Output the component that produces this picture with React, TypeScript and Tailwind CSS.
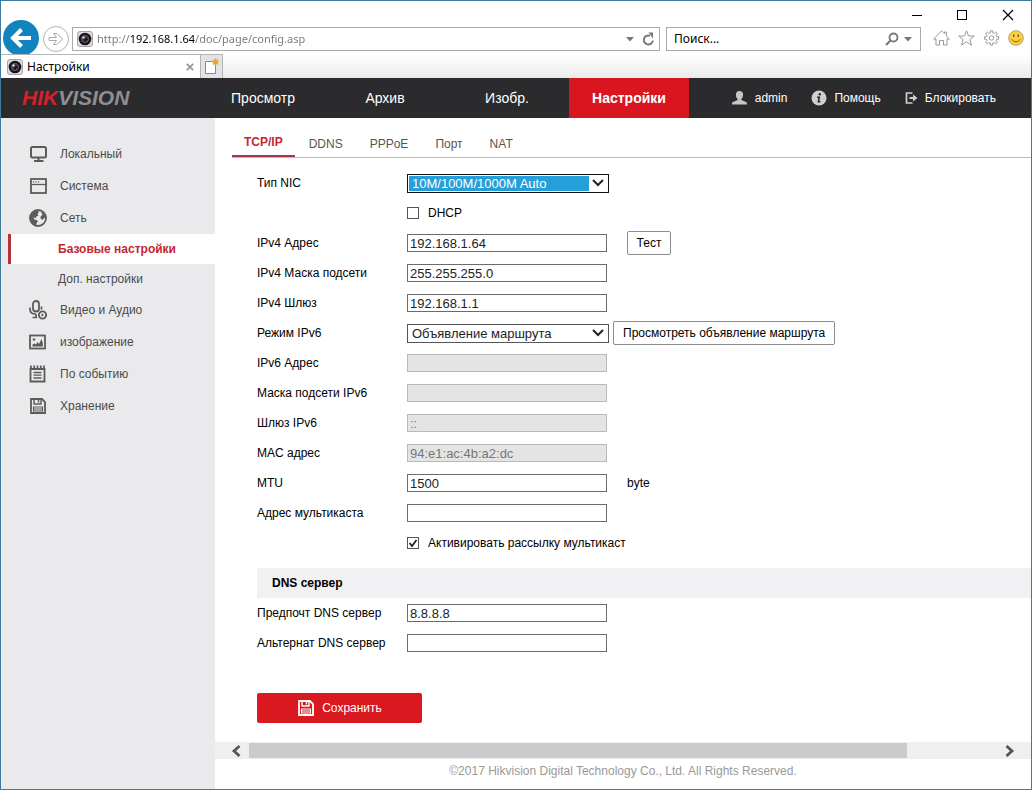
import React, { useState } from "react";

const topNav = ["Просмотр", "Архив", "Изобр.", "Настройки"];
const tabs = ["TCP/IP", "DDNS", "PPPoE", "Порт", "NAT"];

type FieldProps = {
    id: string;
    label: string;
    value?: string;
    disabled?: boolean;
    children?: React.ReactNode;
};

function Row({ id, label, children }: { id: string; label: string; children: React.ReactNode }) {
    return (
        <div className="flex h-[30px] items-center">
            <label htmlFor={id} className="w-[150px] shrink-0 whitespace-nowrap">
                {label}
            </label>
            {children}
        </div>
    );
}

function Field({ id, label, value = "", disabled, children }: FieldProps) {
    const [text, setText] = useState(value);

    return (
        <Row id={id} label={label}>
            <input
                id={id}
                type="text"
                className="mr-5 h-[18px] w-[200px] border border-[#6b6b6b] bg-white px-[2px] text-[13px] leading-4 text-[#222] disabled:border-[#b9b9b9] disabled:bg-[#e4e4e4] disabled:text-[#777]"
                value={text}
                disabled={disabled}
                onChange={(e) => setText(e.target.value)}
            />
            {children}
        </Row>
    );
}

function SelectArrow() {
    return (
        <svg width="18" height="14" viewBox="0 0 18 14" className="pointer-events-none shrink-0">
            <path d="M4 4l5 5 5-5" fill="none" stroke="#222" strokeWidth="2" />
        </svg>
    );
}

function Check({ label, checked: initial = false }: { label: string; checked?: boolean }) {
    const [checked, setChecked] = useState(initial);

    return (
        <div className="flex h-[30px] items-center pl-[150px]">
            <label className="flex items-center gap-[9px] whitespace-nowrap">
                <span className="grid size-3">
                    <input
                        type="checkbox"
                        className="col-start-1 row-start-1 size-3 appearance-none border border-[#555] bg-white"
                        checked={checked}
                        onChange={(e) => setChecked(e.target.checked)}
                    />
                    {checked && (
                        <svg viewBox="0 0 12 12" className="pointer-events-none col-start-1 row-start-1 size-3">
                            <path d="M2.5 6l2.5 3 4.5-6" fill="none" stroke="#222" strokeWidth="1.8" />
                        </svg>
                    )}
                </span>
                {label}
            </label>
        </div>
    );
}

function CameraIcon() {
    return (
        <svg width="16" height="16" viewBox="0 0 16 16" className="shrink-0">
            <rect x="0.5" y="0.5" width="15" height="15" rx="2.5" fill="#dcdcdc" stroke="#a5a5a5" />
            <circle cx="8" cy="8" r="6.3" fill="#16141c" />
            <circle cx="8" cy="8" r="3.6" fill="#3b3042" stroke="#6d6577" strokeWidth="0.8" />
            <circle cx="9" cy="9" r="1.6" fill="#0b0a10" />
            <circle cx="6.5" cy="6.5" r="1.2" fill="#d3dbe6" />
            <circle cx="9.8" cy="10" r="0.8" fill="#c14a44" />
        </svg>
    );
}

function FloppyIcon() {
    return (
        <svg width="18" height="18" viewBox="0 0 18 18" className="shrink-0" fill="none" stroke="currentColor">
            <path d="M2 2h11l3 3v11H2z" strokeWidth="1.8" />
            <path d="M5 2v5h7V2" strokeWidth="1.4" />
            <path d="M9.5 3v2.5" strokeWidth="1.4" />
            <path d="M4.500 10h9v4h-9zM4.500 12h9" strokeWidth="1.1" />
        </svg>
    );
}

const sideIcons = {
    monitor: (
        <svg width="18" height="18" viewBox="0 0 18 18" fill="none" stroke="currentColor">
            <rect x="2" y="2" width="15" height="10.5" rx="1.5" strokeWidth="2" />
            <path d="M9.5 12.500v3M5 16h9.500" strokeWidth="2" />
        </svg>
    ),
    system: (
        <svg width="18" height="18" viewBox="0 0 18 18" fill="none" stroke="currentColor">
            <rect x="2" y="2" width="15" height="14" strokeWidth="1.8" />
            <path d="M2 7.5h15" strokeWidth="1.3" />
            <path d="M4 4.800h1.200M6.500 4.800h1.200M9 4.800h1.200" strokeWidth="1.3" />
        </svg>
    ),
    globe: (
        <svg width="18" height="18" viewBox="0 0 18 18">
            <circle cx="9" cy="9" r="8" fill="none" stroke="currentColor" strokeWidth="1.8" />
            <path
                d="M8.5 1.500L10 3 8.500 5l1 1.500-2 1L6.800 9 4.500 8.500l.8 2L8 11l.8 1.500-1.300 2L7 17 2.500 14 1 9l2-5 3-2zM12 2.500l3 2 1.500 4-1.500.5-1.500 2-2-1.500.3-2.500 1.700-1z"
                fill="currentColor"
            />
        </svg>
    ),
    av: (
        <svg width="18" height="20" viewBox="0 0 18 20" fill="none" stroke="currentColor">
            <rect x="4" y="1" width="6" height="10.5" rx="3" strokeWidth="1.8" />
            <path d="M1 7.500v2c0 3 2.500 4.500 6 4.500M12.500 6.500v3M7 14v4M3.500 17.500H8" strokeWidth="1.7" />
            <circle cx="13.5" cy="15" r="3.6" strokeWidth="1.9" />
            <path d="M12.500 13.300v3.400l2.600-1.700z" fill="currentColor" stroke="none" />
        </svg>
    ),
    image: (
        <svg width="18" height="18" viewBox="1 0 18 18">
            <rect x="2" y="2.5" width="15" height="13" fill="none" stroke="currentColor" strokeWidth="1.8" />
            <path d="M4.500 13.500V11.500l2-1 1.500 1 1.500-2.500 1.500 2L13.500 6l1.300 4v3.500z" fill="currentColor" />
            <circle cx="6" cy="6.500" r="1.2" fill="currentColor" />
        </svg>
    ),
    event: (
        <svg width="18" height="18" viewBox="1 0 18 18" fill="none" stroke="currentColor">
            <path d="M2.500 3v13.500h14V3M2 4h15" strokeWidth="1.8" />
            <path d="M3 .5v3M6.200.5v3M9.500.5v3M12.800.5v3M16 .5v3" strokeWidth="1.7" />
            <path d="M5.500 7.500h8M5.500 10.200h8M5.500 13h8" strokeWidth="1.3" />
        </svg>
    ),
    storage: <FloppyIcon />,
};

type SideItem = { label: string; icon?: keyof typeof sideIcons; active?: boolean };

const sideItems: SideItem[] = [
    { label: "Локальный", icon: "monitor" },
    { label: "Система", icon: "system" },
    { label: "Сеть", icon: "globe" },
    { label: "Базовые настройки", active: true },
    { label: "Доп. настройки" },
    { label: "Видео и Аудио", icon: "av" },
    { label: "изображение", icon: "image" },
    { label: "По событию", icon: "event" },
    { label: "Хранение", icon: "storage" },
];

function BrowserChrome() {
    const [url, setUrl] = useState("http://192.168.1.64/doc/page/config.asp");

    return (
        <header className="bg-white font-['Noto_Sans',sans-serif] text-xs text-black">
            <div className="flex h-[26px] items-center justify-end gap-[29px] pr-[15px] pt-[2px]">
                <button aria-label="Свернуть">
                    <svg width="16" height="16" viewBox="0 0 16 16">
                        <path d="M2 8.5h10" stroke="#000" />
                    </svg>
                </button>
                <button aria-label="Развернуть">
                    <svg width="16" height="16" viewBox="0 0 16 16">
                        <rect x="2.5" y="3.5" width="9" height="9" fill="none" stroke="#000" />
                    </svg>
                </button>
                <button aria-label="Закрыть">
                    <svg width="16" height="16" viewBox="0 0 16 16">
                        <path d="M3 3l10 10M13 3L3 13" stroke="#000" strokeWidth="1.2" />
                    </svg>
                </button>
            </div>
            <div className="flex h-[27px] items-end pl-px pr-[7px]">
                <button aria-label="Назад" className="shrink-0">
                    <svg width="38" height="34" viewBox="0 0 38 34" className="block">
                        <circle cx="19" cy="18" r="18" fill="#1184c0" />
                        <path d="M29 18H12M19.500 9.500L11 18l8.500 8.500" fill="none" stroke="#fff" strokeWidth="4" />
                    </svg>
                </button>
                <button aria-label="Вперёд" className="shrink-0">
                    <svg width="32" height="30" viewBox="0 0 32 30" className="block">
                        <circle cx="16" cy="15" r="12.5" fill="#fff" stroke="#b0b0b0" />
                        <path
                            d="M9 13.500h7.500l-3-4h3.500l5.500 5.500-5.500 5.500h-3.500l3-4H9z"
                            fill="#fff"
                            stroke="#a8a8a8"
                        />
                    </svg>
                </button>
                <div className="mb-[3px] flex h-6 min-w-0 flex-1 items-center border border-[#a9a9a9] px-1">
                    <CameraIcon />
                    <input
                        type="text"
                        aria-label="Адрес"
                        className="ml-1 min-w-0 flex-1 bg-[linear-gradient(90deg,#777_33px,#000_33px,#000_97px,#777_97px)] bg-clip-text text-[11px] text-transparent outline-none"
                        value={url}
                        onChange={(e) => setUrl(e.target.value)}
                    />
                    <svg width="8" height="5" viewBox="0 0 8 5" className="mr-2">
                        <path d="M0 0h8L4 4.500z" fill="#777" />
                    </svg>
                    <button aria-label="Обновить">
                        <svg width="13" height="14" viewBox="0 0 13 14" className="block">
                            <path d="M10.800 8.500A4.500 4.500 0 1 1 8 3.800" fill="none" stroke="#777" strokeWidth="1.9" />
                            <path d="M6.500.5H11v6z" fill="#777" />
                        </svg>
                    </button>
                </div>
                <div className="mb-[3px] ml-[6px] flex h-6 w-[255px] items-center border border-[#a9a9a9] pl-[7px] pr-2">
                    <input
                        type="text"
                        aria-label="Поиск"
                        placeholder="Поиск..."
                        className="min-w-0 flex-1 placeholder:text-black outline-none"
                    />
                    <button aria-label="Найти" className="mr-[5px]">
                        <svg width="14" height="14" viewBox="0 0 14 14" className="block">
                            <circle cx="8.5" cy="5.5" r="4" fill="none" stroke="#777" strokeWidth="1.8" />
                            <path d="M5.500 8.500l-4.500 4.500" stroke="#777" strokeWidth="2.2" />
                        </svg>
                    </button>
                    <svg width="8" height="5" viewBox="0 0 8 5">
                        <path d="M0 0h8L4 4.500z" fill="#777" />
                    </svg>
                </div>
                <div className="mb-2 ml-3 flex gap-2">
                    <button aria-label="Домой">
                        <svg width="17" height="16" viewBox="0 0 17 16" className="block" fill="#fff" stroke="#999">
                            <path d="M8.500.8l3 3V2h2v3.800L16.300 9l-1 1-1.300-1.200V15h-3.500v-4.500h-4V15H3V8.800L1.700 10l-1-1z" />
                        </svg>
                    </button>
                    <button aria-label="Избранное">
                        <svg width="17" height="16" viewBox="0 0 17 16" className="block" fill="#fff" stroke="#999">
                            <path d="M8.500.8l2 5.200h5.800l-4.500 3.600 1.700 5.600-5-3.400-5 3.400 1.700-5.600L.7 6h5.800z" />
                        </svg>
                    </button>
                    <button aria-label="Сервис">
                        <svg width="17" height="16" viewBox="0 0 17 16" className="block" fill="#fff" stroke="#999">
                            <path d="M7.300.8h2.400v2l1.500.6 1.500-1.400 1.700 1.700L13 5.200l.6 1.500h2v2.500h-2l-.6 1.500 1.400 1.500-1.700 1.700-1.500-1.400-1.500.6v2H7.300v-2l-1.500-.6-1.500 1.400-1.700-1.700L4 10.700l-.6-1.500h-2V6.700h2L4 5.200 2.600 3.700 4.300 2l1.500 1.400 1.500-.6z" />
                            <circle cx="8.5" cy="8" r="2.2" />
                        </svg>
                    </button>
                    <button aria-label="Отзыв">
                        <svg width="16" height="16" viewBox="0 0 16 16" className="block">
                            <circle cx="8" cy="8" r="7.3" fill="#fbd03f" stroke="#b9a064" />
                            <path d="M5.700 4.500v2.500M10.300 4.500v2.500" stroke="#7a5a10" strokeWidth="1.4" />
                            <path d="M3.800 9.200c1.500 3.400 6.900 3.400 8.400 0" fill="none" stroke="#7a5a10" />
                        </svg>
                    </button>
                </div>
            </div>
            <div className="flex h-6 bg-linear-to-b from-white to-[#ebebeb]">
                <div className="flex w-[199px] items-center gap-1 border-t border-[#b5b5b5] bg-white pl-[6px] pr-[6px]">
                    <CameraIcon />
                    <span className="flex-1">Настройки</span>
                    <button aria-label="Закрыть вкладку">
                        <svg width="8" height="8" viewBox="0 0 8 8" className="block">
                            <path d="M.8.8l6.400 6.400M7.200.8L.8 7.200" stroke="#999" strokeWidth="1.8" />
                        </svg>
                    </button>
                </div>
                <button
                    aria-label="Новая вкладка"
                    className="flex w-[23px] items-center justify-center border border-b-0 border-[#b5b5b5] bg-[#e3e3e6]"
                >
                    <svg width="16" height="18" viewBox="0 0 16 18">
                        <path d="M1.500 3.500h10v12h-10z" fill="#fff" stroke="#8a8a8a" />
                        <circle cx="11.5" cy="4" r="3" fill="#f7dfab" />
                        <path d="M11.500 .5v7M8 4h7M9 1.500l5 5M14 1.500l-5 5" stroke="#e8a12b" strokeWidth="1.1" />
                    </svg>
                </button>
            </div>
        </header>
    );
}

function TopBar() {
    return (
        <div className="flex h-10 items-center bg-[#2b2b2d] text-white">
            <div className="w-[202px] shrink-0 pl-[21px] text-[21px] leading-6 font-bold italic">
                <span className="text-[#d6202a]">HIK</span>
                <span className="text-[#8f8f92]">VISION</span>
            </div>
            <nav className="flex h-full gap-[2px] text-sm">
                {topNav.map((item) => (
                    <a
                        key={item}
                        href="#"
                        className={
                            item === "Настройки"
                                ? "flex w-[120px] items-center justify-center bg-[#d9161f] font-bold"
                                : "flex w-[120px] items-center justify-center"
                        }
                    >
                        {item}
                    </a>
                ))}
            </nav>
            <div className="ml-auto flex items-center gap-6 pr-[35px] text-xs">
                <a href="#" className="flex items-center gap-2">
                    <svg width="15" height="16" viewBox="0 0 15 16" fill="#c6c6c6">
                        <path d="M7.500 1c2.300 0 3.700 1.600 3.600 4-.1 1.900-.8 3.200-1.700 4v1l4.600 2c.7.400 1 1 1 2.500H0c0-1.500.3-2.100 1-2.500l4.600-2V9C4.700 8.200 4 6.900 3.900 5 3.800 2.600 5.200 1 7.500 1z" />
                    </svg>
                    admin
                </a>
                <a href="#" className="flex items-center gap-[7px]">
                    <svg width="16" height="16" viewBox="0 0 16 16">
                        <circle cx="8" cy="8" r="7.5" fill="#d0d0d0" />
                        <circle cx="8.8" cy="4.3" r="1.2" fill="#2b2b2d" />
                        <path d="M6 7.200h2.300l-.9 4.500h2" fill="none" stroke="#2b2b2d" strokeWidth="1.6" />
                    </svg>
                    Помощь
                </a>
                <a href="#" className="flex items-center gap-[7px]">
                    <svg width="13" height="14" viewBox="0 0 13 14" fill="none" stroke="#d0d0d0">
                        <path d="M7.500 2H1.500v10h6" strokeWidth="1.7" />
                        <path d="M4.500 7H9" strokeWidth="2" />
                        <path d="M8 3.500L12.500 7 8 10.500z" fill="#d0d0d0" stroke="none" />
                    </svg>
                    Блокировать
                </a>
            </div>
        </div>
    );
}

function Sidebar() {
    return (
        <aside className="w-[214px] shrink-0 bg-[#eaeaec] pl-[7px] pt-5 text-xs text-[#4a4a4a]">
            {sideItems.map((item) =>
                item.icon ? (
                    <a key={item.label} href="#" className="flex h-8 items-center pl-[21px]">
                        <span className="w-[31px] text-[#5b5b5b]">{sideIcons[item.icon]}</span>
                        {item.label}
                    </a>
                ) : (
                    <a
                        key={item.label}
                        href="#"
                        className={
                            item.active
                                ? "flex h-[30px] items-center border-l-[3px] border-[#b8323c] bg-white pl-[47px] font-bold text-[#c4272f]"
                                : "flex h-[30px] items-center pl-[50px]"
                        }
                    >
                        {item.label}
                    </a>
                )
            )}
        </aside>
    );
}

function NetworkForm() {
    return (
        <form className="pb-[19px] pl-[42px] pt-[10px] text-xs text-black" onSubmit={(e) => e.preventDefault()}>
            <Row id="nic" label="Тип NIC">
                <div className="flex h-[19px] w-[202px] items-center border border-[#111] bg-white p-px">
                    <select
                        id="nic"
                        className="h-full min-w-0 flex-1 appearance-none bg-[#259fda] pl-[3px] text-[13px] leading-[15px] text-white outline-none"
                    >
                        <option>10M/100M/1000M Auto</option>
                    </select>
                    <SelectArrow />
                </div>
            </Row>
            <Check label="DHCP" />
            <Field id="ipv4" label="IPv4 Адрес" value="192.168.1.64">
                <button type="button" className="h-6 w-11 rounded-[2px] border border-[#8c8c8c] bg-white">
                    Тест
                </button>
            </Field>
            <Field id="mask" label="IPv4 Маска подсети" value="255.255.255.0" />
            <Field id="gateway" label="IPv4 Шлюз" value="192.168.1.1" />
            <Row id="ipv6mode" label="Режим IPv6">
                <div className="flex h-[19px] w-[202px] shrink-0 items-center border border-[#555] bg-white p-px">
                    <select
                        id="ipv6mode"
                        className="h-full min-w-0 flex-1 appearance-none pl-[3px] text-[13px] leading-[15px] text-[#222] outline-none"
                    >
                        <option>Объявление маршрута</option>
                    </select>
                    <SelectArrow />
                </div>
                <button
                    type="button"
                    className="ml-1 h-6 whitespace-nowrap rounded-[2px] border border-[#8c8c8c] bg-white px-[9px]"
                >
                    Просмотреть объявление маршрута
                </button>
            </Row>
            <Field id="ipv6" label="IPv6 Адрес" disabled />
            <Field id="ipv6mask" label="Маска подсети IPv6" disabled />
            <Field id="ipv6gateway" label="Шлюз IPv6" value="::" disabled />
            <Field id="mac" label="MAC адрес" value="94:e1:ac:4b:a2:dc" disabled />
            <Field id="mtu" label="MTU" value="1500">
                byte
            </Field>
            <Field id="multicast" label="Адрес мультикаста" />
            <Check label="Активировать рассылку мультикаст" checked />

            <h2 className="mt-[10px] flex h-[30px] items-center bg-[#f1f0f2] pl-[15px] font-bold">DNS сервер</h2>
            <Field id="dns1" label="Предпочт DNS сервер" value="8.8.8.8" />
            <Field id="dns2" label="Альтернат DNS сервер" />

            <button
                type="submit"
                className="mt-[35px] flex h-[30px] w-[165px] items-center justify-center gap-[7px] rounded-[2px] bg-[#d9181f] text-white"
            >
                <FloppyIcon />
                Сохранить
            </button>
        </form>
    );
}

export default function App() {
    return (
        <div className="flex min-h-screen flex-col border border-[#3c7d9f] bg-white font-['Liberation_Sans',Arial,sans-serif]">
            <BrowserChrome />
            <TopBar />
            <div className="flex flex-1">
                <Sidebar />
                <main className="min-w-0 flex-1">
                    <div className="ml-[17px] flex h-10 gap-px border-b border-[#bdbdbd] text-xs text-[#555]">
                        {tabs.map((tab) => (
                            <a
                                key={tab}
                                href="#"
                                className={
                                    tab === "TCP/IP"
                                        ? "flex items-center border-b-2 border-[#a5384a] px-3 pt-[10px] font-bold text-[#c4272f]"
                                        : "flex items-center px-[13px] pt-3"
                                }
                            >
                                {tab}
                            </a>
                        ))}
                    </div>
                    <NetworkForm />
                    <div className="flex h-[17px] items-center bg-[#efefef]">
                        <button aria-label="Прокрутить влево" className="flex w-[34px] justify-end pr-2">
                            <svg width="10" height="12" viewBox="0 0 10 12">
                                <path d="M8.500 1L3 6l5.500 5" fill="none" stroke="#555" strokeWidth="2.8" />
                            </svg>
                        </button>
                        <div className="flex-1">
                            <div className="h-[15px] w-[88%] bg-[#cbcbcd]" />
                        </div>
                        <button aria-label="Прокрутить вправо" className="flex w-[34px] pl-2">
                            <svg width="10" height="12" viewBox="0 0 10 12">
                                <path d="M1.500 1L7 6l-5.500 5" fill="none" stroke="#555" strokeWidth="2.8" />
                            </svg>
                        </button>
                    </div>
                    <footer className="flex h-6 items-center justify-center text-xs text-[#999]">
                        ©2017 Hikvision Digital Technology Co., Ltd. All Rights Reserved.
                    </footer>
                </main>
            </div>
        </div>
    );
}
